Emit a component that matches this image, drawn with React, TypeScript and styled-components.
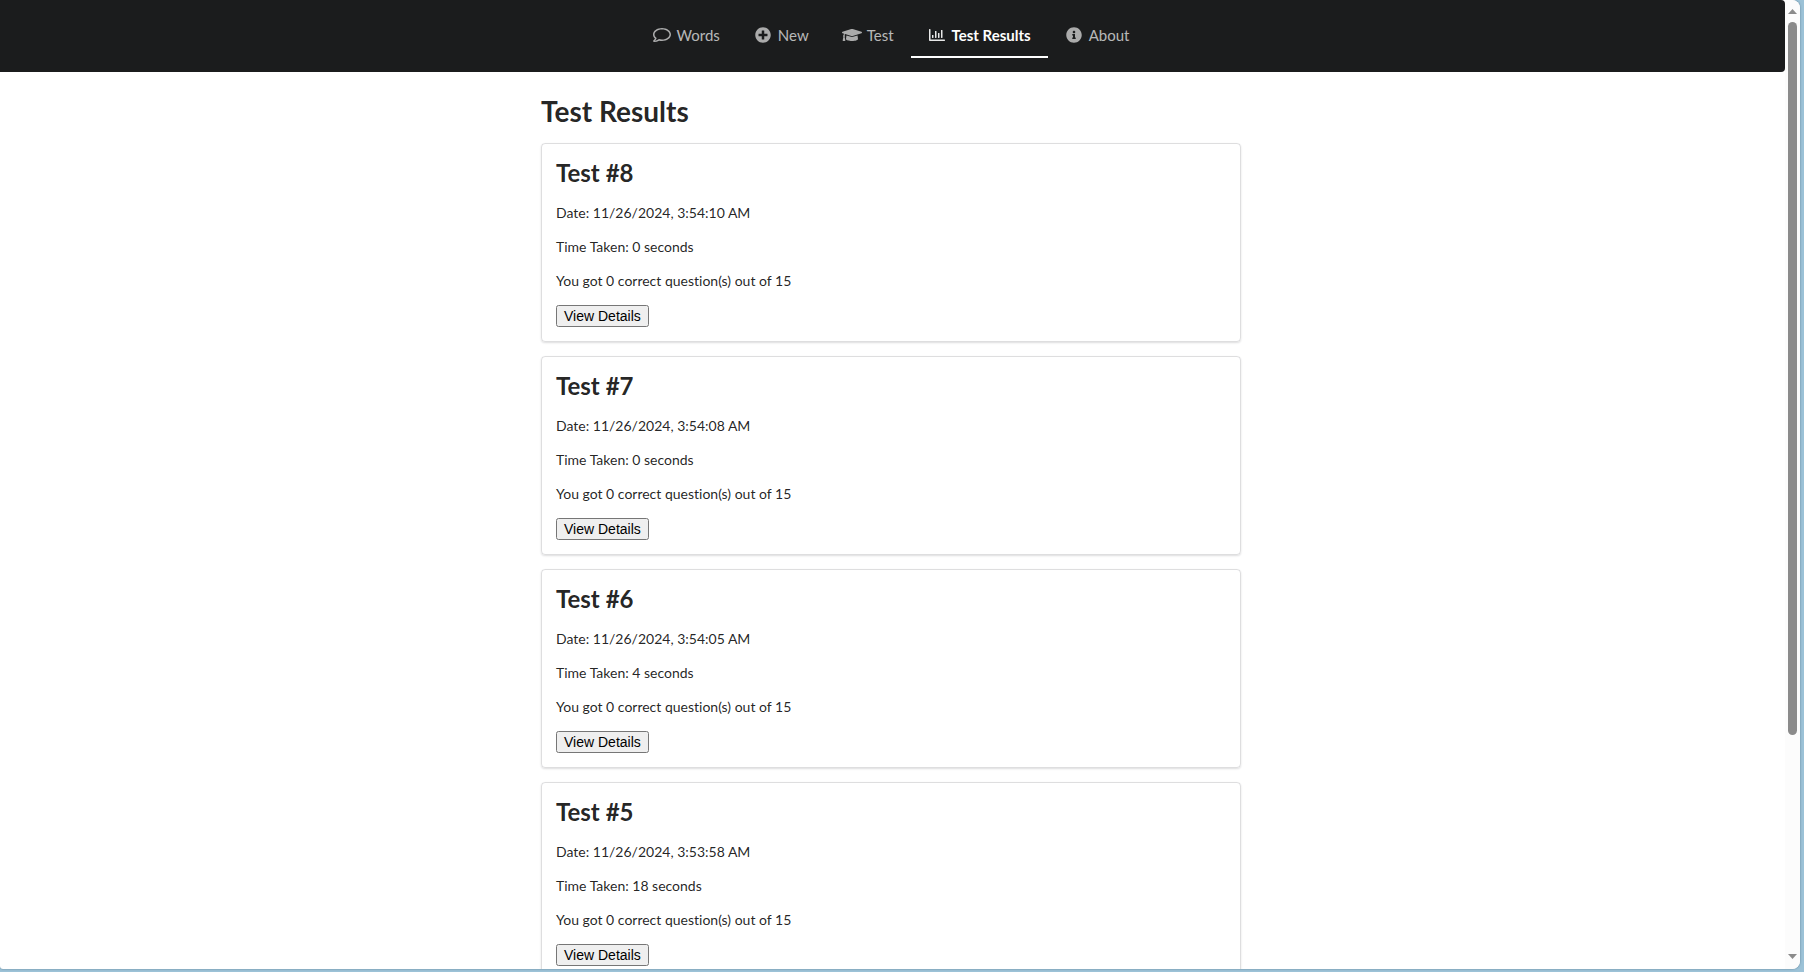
import React from "react";
import styled, { createGlobalStyle } from "styled-components";
import { FaPlusCircle, FaGraduationCap, FaRegChartBar, FaInfoCircle } from "react-icons/fa";

const GlobalStyle = createGlobalStyle`
  *, *::before, *::after { box-sizing: border-box; }
  body {
    margin: 0;
    background: #9cc2d7;
    color: rgba(0, 0, 0, 0.87);
    font-family: Lato, "Helvetica Neue", Arial, sans-serif;
    font-size: 14px;
    font-variant-ligatures: none;
    line-height: 20px;
  }
`;

const Desktop = styled.div`
  height: 100vh;
  padding: 0 4px 3px 0;
  overflow: hidden;
`;

const Window = styled.div`
  display: flex;
  height: 100%;
  overflow: hidden;
  background: #fff;
  border-radius: 0 8px 8px 3px;
  box-shadow: 0 0 2px rgba(40, 70, 90, 0.6);
`;

const Page = styled.div`
  flex: 1;
  min-width: 0;
  margin-left: -3px;
  overflow: hidden;
`;

const NavBar = styled.nav`
  padding: 14px;
  background: #1b1c1d;
  border-radius: 4px;
`;

const NavList = styled.ul`
  display: flex;
  justify-content: center;
  margin: 0;
  padding: 0;
  list-style: none;
`;

const NavLink = styled.a<{ $active?: boolean }>`
  display: flex;
  align-items: center;
  gap: 6px;
  height: 44px;
  padding: 0 17px;
  border-bottom: 2px solid ${(p) => (p.$active ? "#fff" : "transparent")};
  color: ${(p) => (p.$active ? "#fff" : "rgba(255, 255, 255, 0.7)")};
  font-size: 15px;
  font-weight: ${(p) => (p.$active ? 700 : 400)};
  text-decoration: none;
`;

const NavIcon = styled.span`
  display: flex;
  justify-content: center;
  width: 18px;
  opacity: 0.9;

  svg {
    flex: none;
    width: 20px;
    height: 16px;
  }
`;

const Content = styled.main`
  max-width: 700px;
  margin: 21px auto 0;
`;

const PageTitle = styled.h1`
  margin: 0 0 14px;
  font-size: 28px;
  line-height: 36px;
`;

const Card = styled.section`
  margin-bottom: 14px;
  padding: 14px;
  border: 1px solid rgba(34, 36, 38, 0.15);
  border-radius: 4px;
  box-shadow: 0 1px 2px 0 rgba(34, 36, 38, 0.15);
`;

const CardTitle = styled.h2`
  margin: 0 0 16px;
  font-size: 24px;
  line-height: 29px;
`;

const Detail = styled.p`
  margin: 0 0 14px;
`;

const DetailsButton = styled.button`
  display: block;
  font-family: "Liberation Sans", Arial, sans-serif;
  font-size: 14px;
`;

const ScrollTrack = styled.div`
  display: flex;
  flex-direction: column;
  align-items: center;
  width: 15px;
  padding: 9px 0 10px;
  background: #fcfcfc;
`;

const ScrollThumb = styled.div`
  flex: 0 0 75%;
  width: 9px;
  margin: 8px 0 auto;
  border-radius: 5px;
  background: #8b8b8b;
`;

const Arrow = styled.svg`
  flex: none;
  width: 9px;
  height: 5px;
  fill: #8b8b8b;
`;

const CommentIcon = () => (
  <svg viewBox="0 0 576 512" fill="currentColor" aria-hidden>
    <path d="M288 32C129 32 0 125.1 0 240c0 49.3 23.7 94.5 63.3 130.2-8.7 23.3-22.1 32.7-37.1 43.1C15.1 421-6 433 1.6 456.5c5.1 15.4 20.9 24.7 38.1 23.3 57.7-4.6 111.2-19.2 157-42.5 28.7 6.9 59.4 10.7 91.2 10.7 159.1 0 288-93 288-208C576 125.1 447.1 32 288 32zm0 368c-32.5 0-65.4-4.4-97.3-14-32.3 19-78.7 46-134.7 54 32-24 56.8-61.6 61.2-88.4C79.1 325.6 48 286.7 48 240c0-70.9 86.3-160 240-160s240 89.1 240 160c0 71-86.3 160-240 160z" />
  </svg>
);

const links: { label: string; icon: React.ReactNode; active?: boolean }[] = [
  { label: "Words", icon: <CommentIcon /> },
  { label: "New", icon: <FaPlusCircle aria-hidden /> },
  { label: "Test", icon: <FaGraduationCap aria-hidden /> },
  { label: "Test Results", icon: <FaRegChartBar aria-hidden />, active: true },
  { label: "About", icon: <FaInfoCircle aria-hidden /> },
];

const results = [
  { id: 8, date: "11/26/2024, 3:54:10 AM", seconds: 0, correct: 0, total: 15 },
  { id: 7, date: "11/26/2024, 3:54:08 AM", seconds: 0, correct: 0, total: 15 },
  { id: 6, date: "11/26/2024, 3:54:05 AM", seconds: 4, correct: 0, total: 15 },
  { id: 5, date: "11/26/2024, 3:53:58 AM", seconds: 18, correct: 0, total: 15 },
];

export default function App() {
  return (
    <>
      <GlobalStyle />
      <Desktop>
        <Window>
          <Page>
            <NavBar>
              <NavList>
                {links.map(({ label, icon, active }) => (
                  <li key={label}>
                    <NavLink href="#" $active={active} aria-current={active ? "page" : undefined}>
                      <NavIcon>{icon}</NavIcon>
                      {label}
                    </NavLink>
                  </li>
                ))}
              </NavList>
            </NavBar>
            <Content>
              <PageTitle>Test Results</PageTitle>
              {results.map((r) => (
                <Card key={r.id}>
                  <CardTitle>{`Test #${r.id}`}</CardTitle>
                  <Detail>{`Date: ${r.date}`}</Detail>
                  <Detail>{`Time Taken: ${r.seconds} seconds`}</Detail>
                  <Detail>{`You got ${r.correct} correct question(s) out of ${r.total}`}</Detail>
                  <DetailsButton type="button">View Details</DetailsButton>
                </Card>
              ))}
            </Content>
          </Page>
          <ScrollTrack aria-hidden>
            <Arrow viewBox="0 0 9 5">
              <path d="M4.5 0L9 5H0Z" />
            </Arrow>
            <ScrollThumb />
            <Arrow viewBox="0 0 9 5">
              <path d="M0 0H9L4.5 5Z" />
            </Arrow>
          </ScrollTrack>
        </Window>
      </Desktop>
    </>
  );
}
